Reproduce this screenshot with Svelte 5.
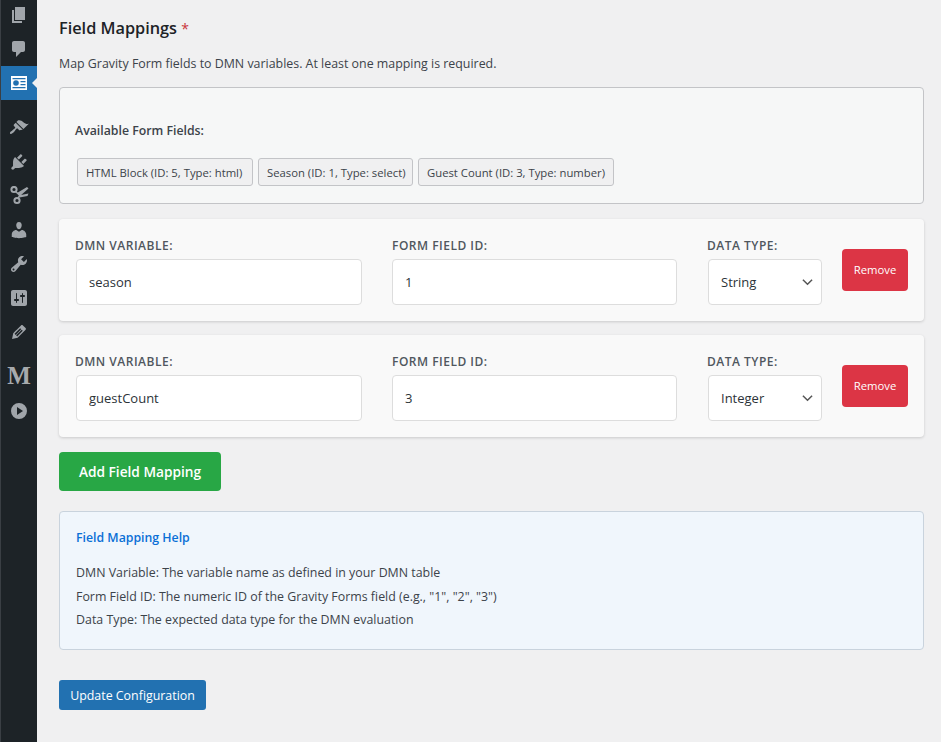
<script lang="ts">
  const fields = ['HTML Block (ID: 5, Type: html)', 'Season (ID: 1, Type: select)', 'Guest Count (ID: 3, Type: number)']
  const mappings = [
    { variable: 'season', id: '1', type: 'String' },
    { variable: 'guestCount', id: '3', type: 'Integer' }
  ]
</script>

<div class="page">
  <nav class="sidebar">
    <span class="ico first">
      <svg viewBox="0 0 20 20"><path d="M6 15V2h10v13H6zm-1 1h8v2H3V5h2v11z"/></svg>
    </span>
    <span class="ico">
      <svg viewBox="0 0 20 20"><path d="M5 2h9c1.100 0 2 .9 2 2v7c0 1.100-.9 2-2 2h-2l-5 5v-5H5c-1.100 0-2-.9-2-2V4c0-1.100.9-2 2-2z"/></svg>
    </span>
    <span class="ico current">
      <svg viewBox="0 0 20 20"><path fill="#fff" d="M2 3h16v14H2z"/><path fill="#2271b1" d="M3.500 5h13v1.200h-13zM3.500 14h13v1.200h-13zM11.500 8h5v1.200h-5zM11.500 11h5v1.200h-5z"/><circle cx="7" cy="10" r="2.800" fill="#2271b1"/></svg>
    </span>
    <span class="ico gap">
      <svg viewBox="0 0 20 20"><path d="M14.480 11.060L7.410 3.990l1.500-1.500c.5-.56 2.300-.47 3.510.32 1.210.8 1.430 1.280 2.910 2.100 1.180.64 2.450 1.260 4.450.85zm-.71.71L6.700 4.700 4.930 6.470c-.39.39-.39 1.020 0 1.410l1.060 1.060c.39.39.39 1.030 0 1.420-.6.6-1.430 1.110-2.210 1.690-.35.26-.7.53-1.010.84C1.430 13.230.4 14.840 1.200 15.650c.8.79 2.420-.22 3.760-1.560.31-.31.58-.66.85-1.020.57-.78 1.080-1.610 1.690-2.210.39-.39 1.020-.39 1.410 0l1.060 1.060c.39.39 1.020.39 1.410 0z"/></svg>
    </span>
    <span class="ico">
      <svg viewBox="0 0 20 20"><path d="M13.110 4.360L9.870 7.600 8 5.730l3.240-3.240c.35-.34 1.050-.2 1.560.32.52.51.66 1.210.31 1.550zm-8 1.770l.91-1.120 9.010 9.010-1.190.84c-.71.71-2.630 1.160-3.820 1.160H6.140L4.900 17.260c-.59.59-1.540.59-2.120 0-.59-.58-.59-1.530 0-2.120l1.240-1.240v-3.880c0-1.130.4-3.190 1.090-3.890zm7.260 3.970l3.240-3.240c.34-.35 1.040-.21 1.550.31.520.51.660 1.210.31 1.550l-3.240 3.250z"/></svg>
    </span>
    <span class="ico">
      <svg viewBox="0 0 20 20">
        <path d="M8 7L18 1l1.500 1.500L11 10zM9.500 9.500l10-2-1 2.500-8 1.500z"/>
        <path d="M6.500 5.500L11 9.500 9 12" fill="none" stroke="#a0a5aa" stroke-width="1.600"/>
        <circle cx="5" cy="3.500" r="2.600" fill="none" stroke="#a0a5aa" stroke-width="2"/>
        <circle cx="8" cy="14.500" r="2.600" fill="none" stroke="#a0a5aa" stroke-width="2"/>
      </svg>
    </span>
    <span class="ico">
      <svg viewBox="0 0 20 20"><path d="M10 9.250c-2.270 0-2.730-3.440-2.730-3.440C7 4.020 7.820 2 9.970 2c2.160 0 2.980 2.020 2.710 3.810 0 0-.41 3.440-2.680 3.440zm0 2.570L12.720 10c2.390 0 4.520 2.330 4.520 4.530v2.490s-3.650 1.130-7.240 1.130c-3.650 0-7.240-1.130-7.240-1.130v-2.490c0-2.250 1.940-4.480 4.470-4.480z"/></svg>
    </span>
    <span class="ico">
      <svg viewBox="0 0 20 20"><path d="M16.680 9.770c-1.340 1.340-3.300 1.670-4.950.99l-5.410 6.520c-.99.990-2.590.99-3.580 0s-.99-2.590 0-3.570l6.520-5.420c-.68-1.650-.35-3.610.99-4.950 1.280-1.280 3.120-1.620 4.720-1.060l-2.890 2.890 2.820 2.820 2.860-2.870c.53 1.580.18 3.390-1.080 4.650zM3.810 16.210c.4.39 1.040.39 1.430 0 .4-.4.4-1.040 0-1.430-.39-.4-1.030-.4-1.430 0-.39.39-.39 1.030 0 1.430z"/></svg>
    </span>
    <span class="ico">
      <svg viewBox="0 0 20 20"><path d="M18 16V4c0-1.100-.9-2-2-2H4c-1.100 0-2 .9-2 2v12c0 1.100.9 2 2 2h12c1.100 0 2-.9 2-2zM8 11h1c.55 0 1 .45 1 1s-.45 1-1 1H8v1.500c0 .28-.22.5-.5.5s-.5-.22-.5-.5V13H6c-.55 0-1-.45-1-1s.45-1 1-1h1V5.500c0-.28.22-.5.5-.5s.5.22.5.5V11zm5-2h-1c-.55 0-1-.45-1-1s.45-1 1-1h1V5.500c0-.28.22-.5.5-.5s.5.22.5.5V7h1c.55 0 1 .45 1 1s-.45 1-1 1h-1v5.500c0 .28-.22.5-.5.5s-.5-.22-.5-.5V9z"/></svg>
    </span>
    <span class="ico">
      <svg viewBox="0 0 20 20"><path d="M13.890 3.390l2.710 2.720c.46.46.42 1.240.03 1.640l-8.010 8.020-5.560 1.160 1.160-5.580s7.600-7.630 7.990-8.030c.39-.39 1.220-.39 1.680.07zm-2.730 2.790l-5.590 5.610 1.110 1.110 5.540-5.650zm-2.970 8.230l5.580-5.600-1.070-1.080-5.590 5.600z"/></svg>
    </span>
    <span class="logo">M</span>
    <span class="ico">
      <svg viewBox="0 0 20 20"><path fill-rule="evenodd" d="M10 2a8 8 0 1 1 0 16 8 8 0 0 1 0-16zM8 6v8l6-4z"/></svg>
    </span>
  </nav>

  <main>
    <h2>Field Mappings <span class="req">*</span></h2>
    <p class="intro">Map Gravity Form fields to DMN variables. At least one mapping is required.</p>

    <section class="available">
      <strong>Available Form Fields:</strong>
      <div class="chips">
        {#each fields as f}
          <span class="chip">{f}</span>
        {/each}
      </div>
    </section>

    {#each mappings as m}
      <div class="row">
        <label class="col var">
          <span>DMN VARIABLE:</span>
          <input type="text" value={m.variable} />
        </label>
        <label class="col fid">
          <span>FORM FIELD ID:</span>
          <input type="text" value={m.id} />
        </label>
        <label class="col dtype">
          <span>DATA TYPE:</span>
          <div class="select">
            {m.type}
            <svg viewBox="0 0 12 8"><path d="M1 1.500l5 5 5-5" fill="none" stroke="#555" stroke-width="1.600"/></svg>
          </div>
        </label>
        <button class="remove">Remove</button>
      </div>
    {/each}

    <button class="add">Add Field Mapping</button>

    <section class="help">
      <h4>Field Mapping Help</h4>
      <p>DMN Variable: The variable name as defined in your DMN table</p>
      <p>Form Field ID: The numeric ID of the Gravity Forms field (e.g., "1", "2", "3")</p>
      <p>Data Type: The expected data type for the DMN evaluation</p>
    </section>

    <button class="update">Update Configuration</button>
  </main>
</div>

<style>
  :global(body) {
    margin: 0;
    background: #f0f0f1;
  }

  .page {
    display: flex;
    height: 742px;
    overflow: hidden;
    font-family: "Open Sans", "Noto Sans", sans-serif;
    color: #3c434a;
    font-size: 13px;
  }

  .sidebar {
    width: 36px;
    flex: none;
    background: #1d2327;
    border-left: 1px solid #3a3f44;
    display: flex;
    flex-direction: column;
  }

  .ico {
    height: 34px;
    flex: none;
    display: flex;
    align-items: center;
    justify-content: center;
  }

  .ico.first { margin-top: -2px; }
  .ico.gap { margin-top: 11px; }

  .ico svg {
    width: 20px;
    height: 20px;
    fill: #a0a5aa;
  }

  .ico.current {
    background: #2271b1;
    position: relative;
  }

  .ico.current::after {
    content: '';
    position: absolute;
    right: 0;
    top: 12px;
    border: 5px solid transparent;
    border-right-color: #f0f0f1;
  }

  .logo {
    height: 34px;
    margin-top: 10px;
    margin-bottom: 1px;
    text-align: center;
    font: bold 25px/34px "Liberation Serif", serif;
    color: #a7aaad;
  }

  main {
    flex: 1;
    padding: 17px 17px 0 22px;
    min-width: 0;
  }

  h2 {
    margin: 0;
    height: 22px;
    font-size: 16.300px;
    line-height: 22px;
    font-weight: 600;
    color: #1d2327;
  }

  .req {
    color: #c9353a;
    font-size: 14px;
    font-weight: 400;
    line-height: 1;
  }

  .intro {
    margin: 16px 0 14px;
    line-height: 18px;
    font-size: 12.400px;
  }

  .available {
    box-sizing: border-box;
    height: 117px;
    background: #f6f7f7;
    border: 1px solid #c3c4c7;
    border-radius: 4px;
    padding: 34px 15px 0;
  }

  .available strong {
    display: block;
    font-weight: 600;
    font-size: 12.300px;
    line-height: 18px;
  }

  .chips {
    display: grid;
    grid-template-columns: 176px 155px 196px;
    gap: 5px;
    margin: 18px 0 0 2px;
  }

  .chip {
    box-sizing: border-box;
    height: 28px;
    line-height: 28px;
    padding-left: 8px;
    background: #f0f0f1;
    border: 1px solid #c3c4c7;
    border-radius: 3px;
    font-size: 11.300px;
    white-space: nowrap;
  }

  .row {
    box-sizing: border-box;
    height: 102px;
    margin-top: 15px;
    background: #f9f9f9;
    border-radius: 4px;
    box-shadow: 0 1px 3px rgba(0, 0, 0, 0.16);
    padding: 19px 16px 0 16px;
    display: flex;
  }

  .row + .row { margin-top: 14px; }

  .col {
    display: flex;
    flex-direction: column;
  }

  .col span {
    font-size: 12px;
    font-weight: 600;
    line-height: 16px;
    color: #50575e;
    letter-spacing: 0.5px;
  }

  .var { width: 317px; }
  .fid { width: 315px; }
  .dtype { width: 135px; }

  input, .select {
    box-sizing: border-box;
    height: 46px;
    margin-top: 5px;
    margin-left: 1px;
    background: #fff;
    border: 1px solid #ddd;
    border-radius: 4px;
    padding: 0 12px;
    font: inherit;
    font-size: 13px;
    color: #2c3338;
  }

  .var input { width: 286px; }
  .fid input { width: 285px; margin-left: 0; }

  .select {
    width: 114px;
    padding-right: 8px;
    display: flex;
    align-items: center;
    justify-content: space-between;
  }

  .select svg { width: 11px; height: 8px; }

  button {
    border: none;
    font-family: inherit;
    color: #fff;
  }

  .remove {
    width: 66px;
    height: 42px;
    margin-top: 11px;
    background: #dc3545;
    border-radius: 4px;
    font-size: 11.300px;
    padding: 0 0 2px;
  }

  .add {
    display: block;
    width: 162px;
    height: 39px;
    margin-top: 15px;
    background: #28a745;
    border-radius: 4px;
    font-size: 13.700px;
    font-weight: 600;
    padding: 0;
  }

  .help {
    box-sizing: border-box;
    height: 139px;
    margin-top: 20px;
    background: #f0f6fc;
    border: 1px solid #c9d3dd;
    border-radius: 4px;
    padding: 17px 16px 0;
  }

  .help h4 {
    margin: 0 0 14px;
    color: #0a6fd6;
    font-size: 12.300px;
    font-weight: 600;
    line-height: 18px;
  }

  .help p {
    margin: 0;
    line-height: 23.500px;
    font-size: 12.400px;
  }

  .update {
    display: block;
    width: 147px;
    height: 30px;
    margin-top: 30px;
    background: #2271b1;
    border-radius: 3px;
    font-size: 12.400px;
    padding: 0;
  }
</style>
